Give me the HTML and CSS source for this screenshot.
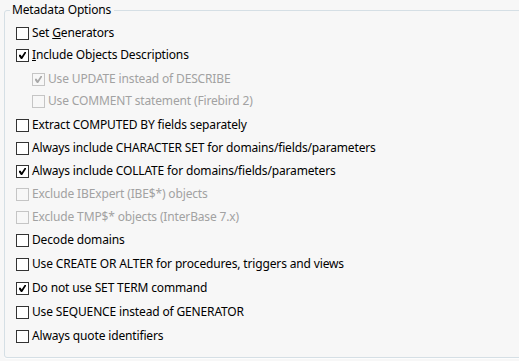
FILE: index.html
```html
<!DOCTYPE html>
<html>
<head>
<meta charset="utf-8">
<link rel="stylesheet" href="styles.css">
</head>
<body>
<fieldset class="group">
  <legend class="title">Metadata Options</legend>
  <div class="rows">
    <div class="row h22"><span class="box"></span><span class="label">Set <u>G</u>enerators</span></div>
    <div class="row h24"><span class="box checked"></span><span class="label"><u>I</u>nclude Objects Descriptions</span></div>
    <div class="row h22 sub disabled"><span class="box checked"></span><span class="label">Use UPDATE instead of DESCRIBE</span></div>
    <div class="row h24 sub disabled"><span class="box"></span><span class="label">Use COMMENT statement (Firebird 2)</span></div>
    <div class="row"><span class="box"></span><span class="label">Extract COMPUTED BY fields separately</span></div>
    <div class="row"><span class="box"></span><span class="label">Always include CHARACTER SET for domains/fields/parameters</span></div>
    <div class="row"><span class="box checked"></span><span class="label">Always include COLLATE for domains/fields/parameters</span></div>
    <div class="row disabled"><span class="box"></span><span class="label">Exclude IBExpert (IBE$*) objects</span></div>
    <div class="row disabled"><span class="box"></span><span class="label">Exclude TMP$* objects (InterBase 7.x)</span></div>
    <div class="row h24"><span class="box"></span><span class="label">Decode domains</span></div>
    <div class="row h24"><span class="box"></span><span class="label">Use CREATE OR ALTER for procedures, triggers and views</span></div>
    <div class="row h24"><span class="box checked"></span><span class="label">Do not use SET TERM command</span></div>
    <div class="row h24"><span class="box"></span><span class="label">Use SEQUENCE instead of GENERATOR</span></div>
    <div class="row"><span class="box"></span><span class="label">Always quote identifiers</span></div>
  </div>
</fieldset>
</body>
</html>
```

FILE: styles.css
```css
html, body {
  margin: 0;
  padding: 0;
  background: #f7f7f7;
  width: 519px;
  height: 361px;
  overflow: hidden;
}
body {
  font-family: "Noto Sans", "Open Sans", sans-serif;
  font-size: 12px;
  letter-spacing: -0.15px;
  color: #000;
}
.group {
  margin: 3px 0 0 4px;
  padding: 0;
  width: 540px;
  height: 355px;
  box-sizing: border-box;
  border: 1px solid #d5dfe5;
  border-radius: 3px;
  box-shadow: 0 1px 0 #fdfdfd;
  min-width: 0;
}
.title {
  margin-left: 5px;
  padding: 0 3px 0 2px;
  line-height: 14px;
  height: 14px;
}
.rows {
  display: flex;
  flex-direction: column;
  padding: 10px 0 0 11px;
}
.row {
  height: 23px;
  display: flex;
  align-items: flex-start;
  gap: 3px;
}
.row.h22 { height: 22px; }
.row.h24 { height: 24px; }
.row.sub { padding-left: 16px; }
.box {
  width: 11px;
  height: 11px;
  border: 1px solid #333;
  background: #fff;
  flex: none;
  position: relative;
}
.label {
  line-height: 13px;
  margin-top: -1px;
  white-space: nowrap;
}
.box.checked::after {
  content: "";
  position: absolute;
  left: 2px;
  top: 2px;
  width: 7px;
  height: 7px;
  background: #000;
  clip-path: polygon(0 40%, 25% 40%, 38% 65%, 80% 0, 100% 0, 100% 15%, 45% 100%, 28% 100%, 0 60%);
}
.disabled .label { color: #a2a2a2; }
.disabled .box { border-color: #c5c5c5; background: #f7f7f7; }
.disabled .box.checked::after { background: #a8a8a8; }
```
